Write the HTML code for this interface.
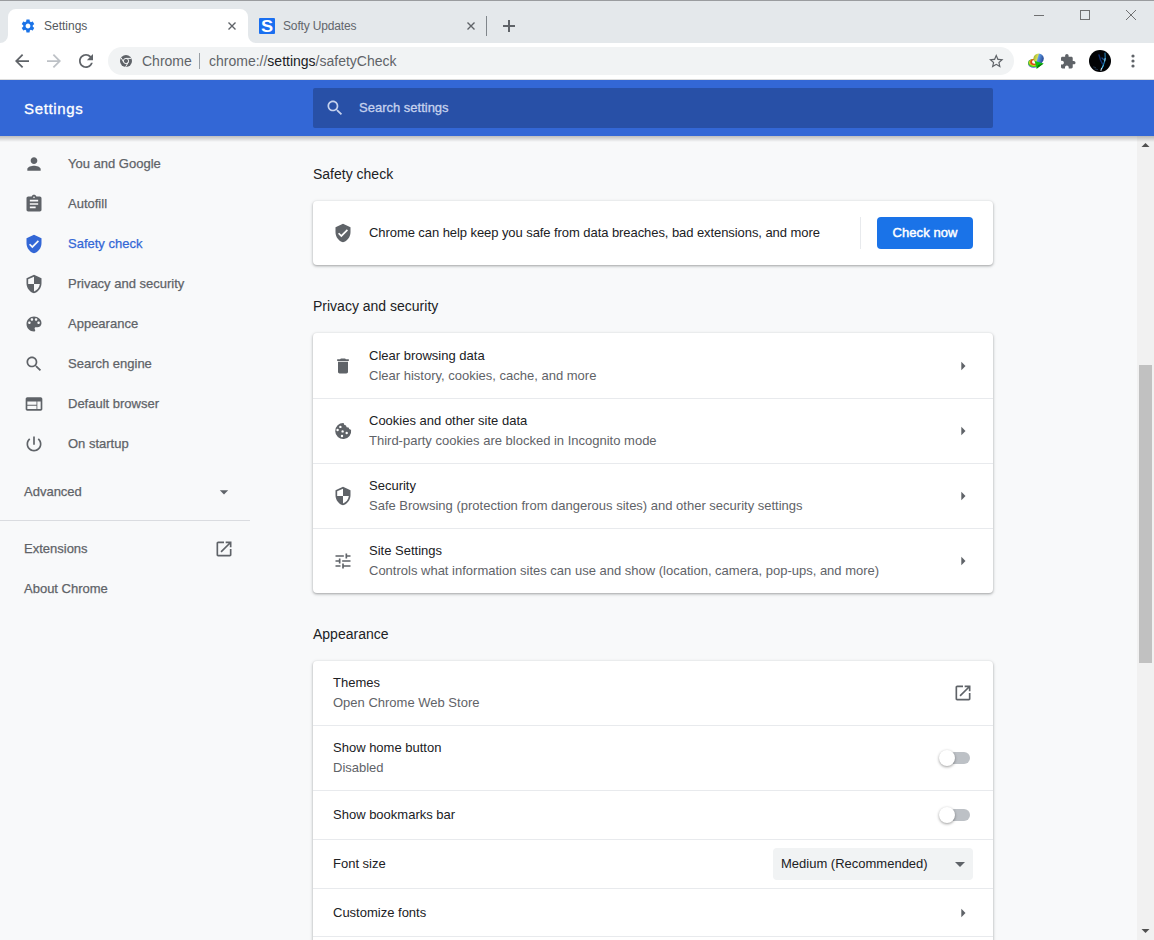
<!DOCTYPE html>
<html><head><meta charset="utf-8">
<style>
*{box-sizing:border-box;margin:0;padding:0}
html,body{width:1154px;height:940px;overflow:hidden;background:#f8f9fa;font-family:"Liberation Sans",sans-serif;position:relative}
.abs{position:absolute}
svg{display:block}
#tabstrip{left:0;top:0;width:1154px;height:43px;background:#e4e8eb}
#topline{left:0;top:0;width:1154px;height:1px;background:#9a9c9f}
#toolbar{left:0;top:43px;width:1154px;height:36px;background:#fff}
#tbline{left:0;top:79px;width:1154px;height:1px;background:#dcdcdc}
#header{left:0;top:80px;width:1154px;height:56px;background:#3367d6}
#hshadow{left:0;top:136px;width:1154px;height:6px;background:linear-gradient(rgba(0,0,0,.24),rgba(0,0,0,.17) 30%,rgba(0,0,0,0))}
.t{white-space:nowrap;position:absolute}
.h2{font-size:14px;line-height:18px;color:#202124}
.main1{font-size:13px;line-height:16px;color:#202124}
.main2{font-size:13px;line-height:16px;color:#5f6368}
.card{background:#fff;border-radius:4px;box-shadow:0 1px 2px 0 rgba(60,64,67,.3),0 1px 3px 1px rgba(60,64,67,.15)}
.sep{height:1px;background:#e8eaed}
.toggle{width:34px;height:16px}
.toggle .bar{position:absolute;left:3px;top:2px;width:28px;height:12px;border-radius:6px;background:#bdc1c6}
.toggle .knob{position:absolute;left:0;top:0;width:16px;height:16px;border-radius:50%;background:#fff;box-shadow:0 1px 3px 0 rgba(0,0,0,.4)}
.nav{font-size:13px;line-height:16px;color:#5f6368;-webkit-text-stroke:0.25px currentColor}
</style></head><body>
<div id="tabstrip" class="abs"></div>
<div id="topline" class="abs"></div>
<!-- active tab -->
<svg class="abs" style="left:0;top:9px" width="264" height="34" viewBox="0 0 264 34">
<path d="M0 34 A8 8 0 0 0 8 26 V8 A8 8 0 0 1 16 0 H240 A8 8 0 0 1 248 8 V26 A8 8 0 0 0 256 34 Z" fill="#fff"/>
</svg>

<!-- tab 1 contents -->
<svg class="abs" style="left:20px;top:18px" width="16" height="16" viewBox="0 0 24 24"><path fill="#1a73e8" d="M19.14 12.94c.04-.3.06-.61.06-.94 0-.32-.02-.64-.07-.94l2.03-1.58c.18-.14.23-.41.12-.61l-1.92-3.32c-.12-.22-.37-.29-.59-.22l-2.39.96c-.5-.38-1.03-.7-1.62-.94l-.36-2.54c-.04-.24-.24-.41-.48-.41h-3.84c-.24 0-.43.17-.47.41l-.36 2.54c-.59.24-1.13.57-1.62.94l-2.39-.96c-.22-.08-.47 0-.59.22L2.74 8.87c-.12.21-.08.47.12.61l2.03 1.58c-.05.3-.09.63-.09.94s.02.64.07.94l-2.03 1.58c-.18.14-.23.41-.12.61l1.92 3.32c.12.22.37.29.59.22l2.39-.96c.5.38 1.03.7 1.62.94l.36 2.54c.05.24.24.41.48.41h3.84c.24 0 .44-.17.47-.41l.36-2.54c.59-.24 1.13-.56 1.62-.94l2.39.96c.22.08.47 0 .59-.22l1.92-3.32c.12-.22.07-.47-.12-.61l-2.01-1.58zM12 15.6c-1.98 0-3.6-1.62-3.6-3.6s1.62-3.6 3.6-3.6 3.6 1.62 3.6 3.6-1.62 3.6-3.6 3.6z"/></svg>
<div class="t" style="left:44px;top:18px;font-size:12px;line-height:16px;color:#55595e">Settings</div>
<svg class="abs" style="left:228px;top:22px" width="8" height="8" viewBox="0 0 8 8"><path d="M0.5 0.5L7.5 7.5M7.5 0.5L0.5 7.5" stroke="#5f6368" stroke-width="1.4"/></svg>
<!-- tab 2 -->
<svg class="abs" style="left:259px;top:18px" width="16" height="16" viewBox="0 0 16 16"><rect x="0" y="0" width="16" height="16" rx="1" fill="#1a6ff0"/><text x="8" y="14.3" text-anchor="middle" font-family="Liberation Sans" font-weight="700" font-size="16.5" fill="#fff" transform="translate(-0.8 -0.6) scale(1.1 1)">S</text></svg>
<div class="t" style="left:283px;top:18px;font-size:12px;line-height:16px;color:#62666b;letter-spacing:-0.15px">Softy Updates</div>
<svg class="abs" style="left:467px;top:22px" width="8" height="8" viewBox="0 0 8 8"><path d="M0.5 0.5L7.5 7.5M7.5 0.5L0.5 7.5" stroke="#5f6368" stroke-width="1.4"/></svg>
<div class="abs" style="left:486px;top:16px;width:1px;height:20px;background:#80868b"></div>
<svg class="abs" style="left:503px;top:20px" width="12" height="12" viewBox="0 0 12 12"><path d="M6 0V12M0 6H12" stroke="#5f6368" stroke-width="2"/></svg>
<!-- window controls -->
<div class="abs" style="left:1034px;top:15px;width:10px;height:1px;background:#6f7071"></div>
<div class="abs" style="left:1080px;top:10px;width:10px;height:10px;border:1px solid #6f7071"></div>
<svg class="abs" style="left:1126px;top:10px" width="10" height="10" viewBox="0 0 10 10"><path d="M0 0L10 10M10 0L0 10" stroke="#6f7071" stroke-width="1"/></svg>
<div id="toolbar" class="abs"></div>
<div id="tbline" class="abs"></div>

<!-- toolbar contents -->
<svg class="abs" style="left:15px;top:54px" width="14" height="14" viewBox="4 4 16 16"><path fill="#5f6368" d="M20 11H7.83l5.59-5.59L12 4l-8 8 8 8 1.41-1.41L7.83 13H20v-2z"/></svg>
<svg class="abs" style="left:47px;top:54px" width="14" height="14" viewBox="4 4 16 16"><path fill="#bdc1c6" d="M12 4l-1.41 1.41L16.17 11H4v2h12.17l-5.58 5.59L12 20l8-8z"/></svg>
<svg class="abs" style="left:79px;top:54px" width="14" height="14" viewBox="4 4 16 16"><path fill="#5f6368" d="M17.65 6.35C16.2 4.9 14.21 4 12 4c-4.42 0-7.990 3.58-7.99 8s3.57 8 7.99 8c3.73 0 6.84-2.55 7.73-6h-2.08c-.82 2.33-3.04 4-5.65 4-3.31 0-6-2.69-6-6s2.69-6 6-6c1.66 0 3.14.69 4.22 1.78L13 11h7V4l-2.35 2.35z"/></svg>
<div class="abs" style="left:108px;top:47px;width:906px;height:28px;border-radius:14px;background:#f1f3f4"></div>
<svg class="abs" style="left:120px;top:55px" width="12" height="12" viewBox="0 0 12 12">
<circle cx="6" cy="6" r="6" fill="#5f6368"/><circle cx="6" cy="6" r="2.6" fill="none" stroke="#f1f3f4" stroke-width="1"/>
<path d="M6 3.4H11.3M3.75 7.3L1.1 2.8M8.25 7.3L5.6 11.9" stroke="#f1f3f4" stroke-width="1"/></svg>
<div class="t" style="left:142px;top:52px;font-size:14px;line-height:18px;color:#5f6368">Chrome</div>
<div class="abs" style="left:199px;top:53px;width:1px;height:16px;background:#9aa0a6"></div>
<div class="t" style="left:209px;top:52px;font-size:14px;line-height:18px;color:#5f6368">chrome://<span style="color:#202124">settings</span>/safetyCheck</div>
<svg class="abs" style="left:989px;top:54px" width="14.5" height="14.5" viewBox="2 2 20 20"><path fill="#5f6368" d="M22 9.24l-7.19-.62L12 2 9.19 8.63 2 9.240l5.46 4.73L5.82 21 12 17.27 18.18 21l-1.63-7.03L22 9.24zM12 15.4l-3.76 2.27 1-4.28-3.32-2.88 4.38-.38L12 6.1l1.710 4.04 4.38.38-3.32 2.88 1 4.28L12 15.4z"/></svg>
<!-- IDM icon -->
<svg class="abs" style="left:1024px;top:50px" width="24" height="22" viewBox="0 0 24 22">
<defs><linearGradient id="gl" x1="0" y1="0" x2="1" y2="0.3"><stop offset="0" stop-color="#8fa514"/><stop offset="0.45" stop-color="#d9e25a"/><stop offset="0.55" stop-color="#5d9be8"/><stop offset="1" stop-color="#2d4f9a"/></linearGradient></defs>
<ellipse cx="9.6" cy="13.4" rx="5.6" ry="4.4" fill="#4f5ad8"/>
<ellipse cx="9.6" cy="13" rx="5.5" ry="4.1" fill="#4fcf1e"/>
<ellipse cx="9.8" cy="12.4" rx="4.8" ry="3.5" fill="#e0cf18"/>
<ellipse cx="10" cy="12" rx="3.8" ry="2.9" fill="#d9441a"/>
<ellipse cx="10.3" cy="11.8" rx="2.3" ry="1.9" fill="#fff"/>
<circle cx="14.6" cy="8.6" r="5.2" fill="url(#gl)"/>
<path d="M10.8 11 L19.6 13.6 L12.6 18.8 Z" fill="#12c212"/>
<path d="M12.6 18.8 L19.6 13.6 L14 15 Z" fill="#0a7a0a"/>
</svg>
<svg class="abs" style="left:1061px;top:54px" width="14.5" height="14.5" viewBox="2 1 21 21"><path fill="#5f6368" d="M20.5 11H19V7c0-1.1-.9-2-2-2h-4V3.5C13 2.12 11.88 1 10.5 1S8 2.12 8 3.5V5H4c-1.1 0-1.99.9-1.99 2v3.8H3.5c1.49 0 2.7 1.21 2.7 2.7s-1.21 2.7-2.7 2.7H2V20c0 1.1.9 2 2 2h3.8v-1.5c0-1.49 1.21-2.7 2.7-2.7 1.49 0 2.7 1.21 2.7 2.7V22H17c1.1 0 2-.9 2-2v-4h1.5c1.38 0 2.5-1.12 2.5-2.5S21.880 11 20.5 11z"/></svg>
<!-- avatar -->
<svg class="abs" style="left:1089px;top:50px" width="22" height="22" viewBox="0 0 22 22">
<circle cx="11" cy="11" r="11" fill="#020305"/>
<path d="M10 5 L11.5 10 L13.5 14" stroke="#10306e" stroke-width="1.4" fill="none" stroke-linecap="round"/>
<path d="M13 8 L14.5 9.5" stroke="#15488a" stroke-width="1.2" fill="none" stroke-linecap="round"/>
<path d="M16 3 L16.2 8 L15.4 12 L14.2 15.5 L13 18.5" stroke="#2583b8" stroke-width="1.1" fill="none" stroke-linecap="round"/>
<path d="M16.1 8.5 L15.8 11" stroke="#8fdcf5" stroke-width="1" stroke-linecap="round"/>
<path d="M14.2 15.5 L13.4 17.5" stroke="#58c0ea" stroke-width="1" stroke-linecap="round"/>
<path d="M12.6 18.2 L12 20.4" stroke="#c8dce8" stroke-width="1.1" stroke-linecap="round"/>
<path d="M4.5 17 L6.5 17.5 M6 19 L8.5 19.5" stroke="#243a52" stroke-width="0.9" stroke-linecap="round"/>
</svg>
<svg class="abs" style="left:1130.5px;top:54px" width="4" height="14" viewBox="0 0 4 14"><circle cx="2" cy="2" r="1.6" fill="#5f6368"/><circle cx="2" cy="7" r="1.6" fill="#5f6368"/><circle cx="2" cy="12" r="1.6" fill="#5f6368"/></svg>
<div id="header" class="abs"></div>


<!-- header contents -->
<div class="t" style="left:24px;top:99px;font-size:15px;line-height:20px;color:#fff;letter-spacing:0.65px;-webkit-text-stroke:0.3px #fff">Settings</div>
<div class="abs" style="left:313px;top:88px;width:680px;height:40px;border-radius:2px;background:#2850a7"></div>
<svg class="abs" style="left:325px;top:98px" width="20" height="20" viewBox="0 0 24 24"><path fill="#c6d2ee" d="M15.5 14h-.79l-.28-.27C15.41 12.59 16 11.11 16 9.5 16 5.91 13.09 3 9.5 3S3 5.91 3 9.5 5.91 16 9.5 16c1.610 0 3.09-.59 4.23-1.57l.27.28v.79l5 4.99L20.49 19l-4.99-5zm-6 0C7.01 14 5 11.99 5 9.5S7.01 5 9.5 5 14 7.01 14 9.5 11.99 14 9.5 14z"/></svg>
<div class="t" style="left:359px;top:100px;font-size:13px;line-height:16px;color:#c6d2ee;-webkit-text-stroke:0.3px #c6d2ee">Search settings</div>
<!-- sidebar -->
<svg class="abs" style="left:24px;top:154px" width="20" height="20" viewBox="0 0 24 24"><path fill="#5f6368" d="M12 12c2.21 0 4-1.79 4-4s-1.79-4-4-4-4 1.79-4 4 1.79 4 4 4zm0 2c-2.67 0-8 1.34-8 4v2h16v-2c0-2.66-5.33-4-8-4z"/></svg>
<div class="t nav" style="left:68px;top:156px;color:#5f6368">You and Google</div>
<svg class="abs" style="left:24px;top:194px" width="20" height="20" viewBox="0 0 24 24"><path fill="#5f6368" d="M19 3h-4.18C14.4 1.84 13.3 1 12 1c-1.3 0-2.4.84-2.82 2H5c-1.1 0-2 .9-2 2v14c0 1.1.9 2 2 2h14c1.1 0 2-.9 2-2V5c0-1.1-.9-2-2-2zm-7 0c.55 0 1 .45 1 1s-.45 1-1 1-1-.45-1-1 .45-1 1-1zm2 14H7v-2h7v2zm3-4H7v-2h10v2zm0-4H7V7h10v2z"/></svg>
<div class="t nav" style="left:68px;top:196px;color:#5f6368">Autofill</div>
<svg class="abs" style="left:24px;top:234px" width="20" height="20" viewBox="0 0 24 24"><path fill="#3367d6" d="M12 1L3 5v6c0 5.55 3.84 10.74 9 12 5.16-1.26 9-6.45 9-12V5l-9-4zm-2 16l-4-4 1.41-1.41L10 14.17l6.59-6.59L18 9l-8 8z"/></svg>
<div class="t nav" style="left:68px;top:236px;color:#3367d6">Safety check</div>
<svg class="abs" style="left:24px;top:274px" width="20" height="20" viewBox="0 0 24 24"><path fill="#5f6368" d="M12 1L3 5v6c0 5.55 3.84 10.74 9 12 5.16-1.26 9-6.45 9-12V5l-9-4zm0 10.99h7c-.53 4.12-3.28 7.79-7 8.94V12H5V6.3l7-3.11v8.8z"/></svg>
<div class="t nav" style="left:68px;top:276px;color:#5f6368">Privacy and security</div>
<svg class="abs" style="left:24px;top:314px" width="20" height="20" viewBox="0 0 24 24"><path fill="#5f6368" d="M12 3c-4.97 0-9 4.03-9 9s4.03 9 9 9c.83 0 1.5-.67 1.5-1.5 0-.39-.15-.74-.39-1.01-.23-.26-.38-.61-.38-.99 0-.83.67-1.5 1.5-1.5H16c2.76 0 5-2.24 5-5 0-4.42-4.03-8-9-8zm-5.5 9c-.83 0-1.5-.67-1.5-1.5S5.67 9 6.5 9 8 9.67 8 10.5 7.33 12 6.5 12zm3-4C8.67 8 8 7.33 8 6.5S8.67 5 9.5 5s1.5.67 1.5 1.5S10.33 8 9.5 8zm5 0c-.83 0-1.5-.67-1.5-1.5S13.67 5 14.5 5s1.5.67 1.5 1.5S15.33 8 14.5 8zm3 4c-.83 0-1.5-.67-1.5-1.5S16.67 9 17.5 9s1.5.67 1.5 1.5-.67 1.5-1.5 1.5z"/></svg>
<div class="t nav" style="left:68px;top:316px;color:#5f6368">Appearance</div>
<svg class="abs" style="left:24px;top:354px" width="20" height="20" viewBox="0 0 24 24"><path fill="#5f6368" d="M15.5 14h-.79l-.28-.27C15.41 12.59 16 11.11 16 9.5 16 5.91 13.09 3 9.5 3S3 5.91 3 9.5 5.91 16 9.5 16c1.610 0 3.09-.59 4.23-1.57l.27.28v.79l5 4.99L20.49 19l-4.99-5zm-6 0C7.01 14 5 11.99 5 9.5S7.01 5 9.5 5 14 7.01 14 9.5 11.99 14 9.5 14z"/></svg>
<div class="t nav" style="left:68px;top:356px;color:#5f6368">Search engine</div>
<svg class="abs" style="left:24px;top:394px" width="20" height="20" viewBox="0 0 24 24"><path fill="#5f6368" d="M20 4H4c-1.1 0-1.99.9-1.99 2L2 18c0 1.1.9 2 2 2h16c1.1 0 2-.9 2-2V6c0-1.1-.9-2-2-2zm-5 14H4v-4h11v4zm0-5H4V9h11v4zm5 5h-4V9h4v9z"/></svg>
<div class="t nav" style="left:68px;top:396px;color:#5f6368">Default browser</div>
<svg class="abs" style="left:24px;top:434px" width="20" height="20" viewBox="0 0 24 24"><path fill="#5f6368" d="M13 3h-2v10h2V3zm4.83 2.17l-1.42 1.42C17.99 7.86 19 9.81 19 12c0 3.87-3.13 7-7 7s-7-3.13-7-7c0-2.19 1.01-4.14 2.58-5.42L6.17 5.17C4.23 6.82 3 9.26 3 12c0 4.97 4.03 9 9 9s9-4.03 9-9c0-2.74-1.23-5.18-3.17-6.83z"/></svg>
<div class="t nav" style="left:68px;top:436px;color:#5f6368">On startup</div>
<div class="t nav" style="left:24px;top:484px">Advanced</div>
<svg class="abs" style="left:214px;top:482px" width="20" height="20" viewBox="0 0 24 24"><path fill="#5f6368" d="M7 10l5 5 5-5z"/></svg>
<div class="abs" style="left:0;top:520px;width:250px;height:1px;background:#dadce0"></div>
<div class="t nav" style="left:24px;top:540.5px">Extensions</div>
<svg class="abs" style="left:214px;top:539px" width="20" height="20" viewBox="0 0 24 24"><path fill="#5f6368" d="M19 19H5V5h7V3H5c-1.11 0-2 .9-2 2v14c0 1.1.89 2 2 2h14c1.1 0 2-.9 2-2v-7h-2v7zM14 3v2h3.59l-9.83 9.83 1.41 1.41L19 6.41V10h2V3h-7z"/></svg>
<div class="t nav" style="left:24px;top:581px">About Chrome</div>

<!-- main -->
<div class="t h2" style="left:313px;top:165px">Safety check</div>
<div class="card abs" style="left:313px;top:201px;width:680px;height:64px"></div>
<svg class="abs" style="left:333px;top:223px" width="20" height="20" viewBox="0 0 24 24"><path fill="#5f6368" d="M12 1L3 5v6c0 5.55 3.84 10.74 9 12 5.16-1.26 9-6.45 9-12V5l-9-4zm-2 16l-4-4 1.41-1.41L10 14.17l6.59-6.59L18 9l-8 8z"/></svg>
<div class="t main1" style="left:369px;top:225px;letter-spacing:-0.07px">Chrome can help keep you safe from data breaches, bad extensions, and more</div>
<div class="abs" style="left:860px;top:217px;width:1px;height:32px;background:#e8eaed"></div>
<div class="abs" style="left:877px;top:217px;width:96px;height:32px;border-radius:4px;background:#1a73e8"></div>
<div class="t" style="left:877px;top:225px;width:96px;text-align:center;font-size:13px;line-height:16px;font-weight:400;color:#fff;-webkit-text-stroke:0.45px #fff;letter-spacing:0.1px">Check now</div>
<div class="t h2" style="left:313px;top:297px">Privacy and security</div>
<div class="card abs" style="left:313px;top:333px;width:680px;height:260px"></div>
<svg class="abs" style="left:333px;top:356px" width="20" height="20" viewBox="0 0 24 24"><path fill="#5f6368" d="M6 19c0 1.1.9 2 2 2h8c1.1 0 2-.9 2-2V7H6v12zM19 4h-3.5l-1-1h-5l-1 1H5v2h14V4z"/></svg>
<div class="t main1" style="left:369px;top:348px">Clear browsing data</div>
<div class="t main2" style="left:369px;top:368px">Clear history, cookies, cache, and more</div>
<svg class="abs" style="left:953px;top:356px" width="20" height="20" viewBox="0 0 24 24"><path fill="#5f6368" d="M10 17l5-5-5-5v10z"/></svg>
<div class="abs sep" style="left:313px;top:398px;width:680px"></div>
<svg class="abs" style="left:333px;top:421px" width="20" height="20" viewBox="0 0 20 20"><path fill="#5f6368" fill-rule="evenodd" d="M10.6 2 A8 8 0 1 0 18.1 8.7 A2.3 2.3 0 0 1 15.6 6.6 A2.4 2.4 0 0 1 13 4.4 A2.4 2.4 0 0 1 10.6 2 Z
M7.4 5.9 m-1.2 0 a1.2 1.2 0 1 0 2.4 0 a1.2 1.2 0 1 0 -2.4 0 Z
M4.6 9 m-1.2 0 a1.2 1.2 0 1 0 2.4 0 a1.2 1.2 0 1 0 -2.4 0 Z
M9.6 10.4 m-1.2 0 a1.2 1.2 0 1 0 2.4 0 a1.2 1.2 0 1 0 -2.4 0 Z
M13.7 12 m-1.2 0 a1.2 1.2 0 1 0 2.4 0 a1.2 1.2 0 1 0 -2.4 0 Z
M9 15 m-1.2 0 a1.2 1.2 0 1 0 2.4 0 a1.2 1.2 0 1 0 -2.4 0 Z"/></svg>
<div class="t main1" style="left:369px;top:413px">Cookies and other site data</div>
<div class="t main2" style="left:369px;top:433px">Third-party cookies are blocked in Incognito mode</div>
<svg class="abs" style="left:953px;top:421px" width="20" height="20" viewBox="0 0 24 24"><path fill="#5f6368" d="M10 17l5-5-5-5v10z"/></svg>
<div class="abs sep" style="left:313px;top:463px;width:680px"></div>
<svg class="abs" style="left:333px;top:486px" width="20" height="20" viewBox="0 0 24 24"><path fill="#5f6368" d="M12 1L3 5v6c0 5.55 3.84 10.74 9 12 5.16-1.26 9-6.45 9-12V5l-9-4zm0 10.99h7c-.53 4.12-3.28 7.79-7 8.94V12H5V6.3l7-3.11v8.8z"/></svg>
<div class="t main1" style="left:369px;top:478px">Security</div>
<div class="t main2" style="left:369px;top:498px">Safe Browsing (protection from dangerous sites) and other security settings</div>
<svg class="abs" style="left:953px;top:486px" width="20" height="20" viewBox="0 0 24 24"><path fill="#5f6368" d="M10 17l5-5-5-5v10z"/></svg>
<div class="abs sep" style="left:313px;top:528px;width:680px"></div>
<svg class="abs" style="left:333px;top:551px" width="20" height="20" viewBox="0 0 24 24"><path fill="#5f6368" d="M3 17v2h6v-2H3zM3 5v2h10V5H3zm10 16v-2h8v-2h-8v-2h-2v6h2zM7 9v2H3v2h4v2h2V9H7zm14 4v-2H11v2h10zm-6-4h2V7h4V5h-4V3h-2v6z"/></svg>
<div class="t main1" style="left:369px;top:543px">Site Settings</div>
<div class="t main2" style="left:369px;top:563px">Controls what information sites can use and show (location, camera, pop-ups, and more)</div>
<svg class="abs" style="left:953px;top:551px" width="20" height="20" viewBox="0 0 24 24"><path fill="#5f6368" d="M10 17l5-5-5-5v10z"/></svg>
<div class="t h2" style="left:313px;top:625px">Appearance</div>
<div class="card abs" style="left:313px;top:661px;width:680px;height:300px"></div>
<div class="t main1" style="left:333px;top:675px">Themes</div>
<div class="t main2" style="left:333px;top:695px">Open Chrome Web Store</div>
<svg class="abs" style="left:953px;top:683px" width="20" height="20" viewBox="0 0 24 24"><path fill="#5f6368" d="M19 19H5V5h7V3H5c-1.11 0-2 .9-2 2v14c0 1.1.89 2 2 2h14c1.1 0 2-.9 2-2v-7h-2v7zM14 3v2h3.59l-9.83 9.83 1.41 1.41L19 6.41V10h2V3h-7z"/></svg>
<div class="abs sep" style="left:313px;top:725px;width:680px"></div>
<div class="t main1" style="left:333px;top:740px">Show home button</div>
<div class="t main2" style="left:333px;top:760px">Disabled</div>
<div class="toggle abs" style="left:939px;top:750px"><div class="bar"></div><div class="knob"></div></div>
<div class="abs sep" style="left:313px;top:790px;width:680px"></div>
<div class="t main1" style="left:333px;top:807px">Show bookmarks bar</div>
<div class="toggle abs" style="left:939px;top:807px"><div class="bar"></div><div class="knob"></div></div>
<div class="abs sep" style="left:313px;top:839px;width:680px"></div>
<div class="t main1" style="left:333px;top:856px">Font size</div>
<div class="abs" style="left:773px;top:848px;width:200px;height:32px;border-radius:4px;background:#f1f3f4"></div>
<div class="t main1" style="left:781px;top:856px">Medium (Recommended)</div>
<svg class="abs" style="left:948px;top:852px" width="24" height="24" viewBox="0 0 24 24"><path fill="#5f6368" d="M7 10l5 5 5-5z"/></svg>
<div class="abs sep" style="left:313px;top:888px;width:680px"></div>
<div class="t main1" style="left:333px;top:905px">Customize fonts</div>
<svg class="abs" style="left:953px;top:903px" width="20" height="20" viewBox="0 0 24 24"><path fill="#5f6368" d="M10 17l5-5-5-5v10z"/></svg>
<div class="abs sep" style="left:313px;top:936px;width:680px"></div>
<!-- scrollbar -->
<div class="abs" style="left:1137px;top:136px;width:17px;height:804px;background:#f1f1f1"></div>
<div class="abs" style="left:1139px;top:365px;width:13px;height:298px;background:#c1c1c1"></div>
<svg class="abs" style="left:1137px;top:136px" width="17" height="17" viewBox="0 0 17 17"><path d="M4.5 11L8.5 7L12.5 11Z" fill="#505050"/></svg>
<svg class="abs" style="left:1137px;top:923px" width="17" height="17" viewBox="0 0 17 17"><path d="M4.5 6L8.5 10L12.5 6Z" fill="#505050"/></svg>
<div id="hshadow" class="abs"></div>
</body></html>
